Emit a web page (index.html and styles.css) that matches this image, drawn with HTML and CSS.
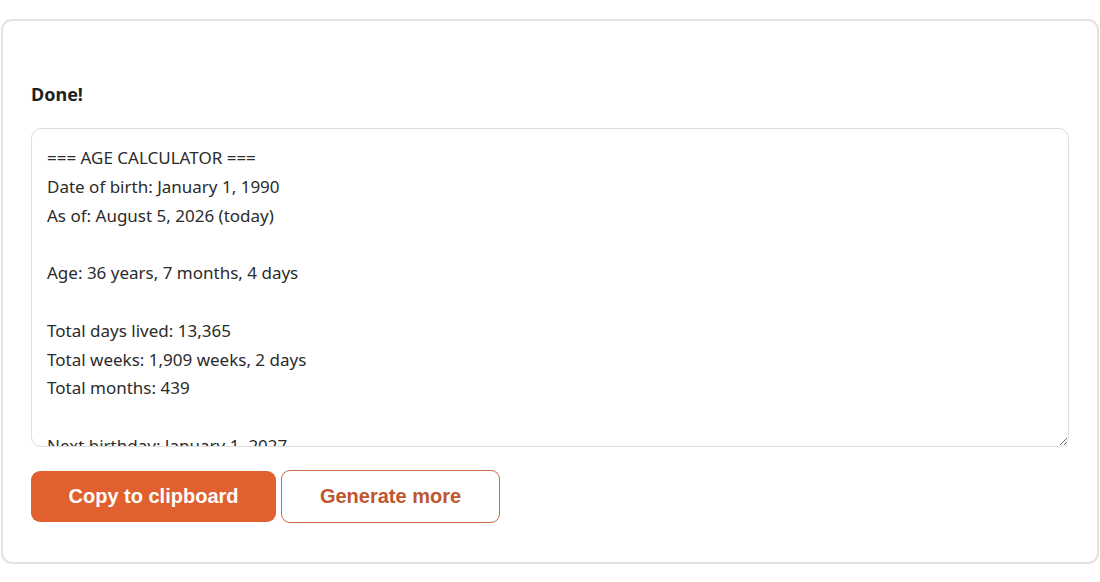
FILE: index.html
```html
<!DOCTYPE html>
<html lang="en">
<head>
<meta charset="utf-8">
<title>Age Calculator</title>
<link rel="stylesheet" href="styles.css">
</head>
<body>
<div class="card">
  <h3 class="status">Done!</h3>
  <textarea class="output" readonly>=== AGE CALCULATOR ===
Date of birth: January 1, 1990
As of: August 5, 2026 (today)

Age: 36 years, 7 months, 4 days

Total days lived: 13,365
Total weeks: 1,909 weeks, 2 days
Total months: 439

Next birthday: January 1, 2027
Days until next birthday: 149
Turning: 37</textarea>
  <div class="actions">
    <button class="btn btn-primary">Copy to clipboard</button>
    <button class="btn btn-outline">Generate more</button>
  </div>
</div>
</body>
</html>
```

FILE: styles.css
```css
html, body {
  margin: 0;
  padding: 0;
  background: #ffffff;
}

body {
  padding: 19px 0 18px 1px;
  font-family: "Noto Sans", "Open Sans", sans-serif;
}

.card {
  width: 1098px;
  box-sizing: border-box;
  border: 2px solid #e2e2e2;
  border-radius: 11px;
  padding: 59px 28px 39px 28px;
  background: #fff;
}

.status {
  margin: 0 0 20px 0;
  font-size: 18px;
  line-height: 28px;
  font-weight: 700;
  color: #1f1f1f;
}

.output {
  display: block;
  width: 100%;
  height: 319px;
  box-sizing: border-box;
  margin: 0;
  padding: 15px 15px;
  border: 1px solid #dedede;
  border-radius: 10px;
  font-family: "Noto Sans", "Open Sans", sans-serif;
  font-size: 17px;
  line-height: 28.8px;
  color: #2b2b2b;
  background: #fff;
  resize: vertical;
  overflow: hidden;
  outline: none;
}

.actions {
  display: flex;
  gap: 5px;
  align-items: center;
  margin-top: 23px;
}

.btn {
  font-family: "Liberation Sans", Arial, sans-serif;
  font-weight: 700;
  font-size: 20px;
  border-radius: 9px;
  cursor: pointer;
  box-sizing: border-box;
}

.btn-primary {
  width: 245px;
  height: 51px;
  background: #e0602f;
  color: #fff;
  border: none;
}

.btn-outline {
  width: 219px;
  height: 53px;
  background: #fff;
  color: #c0562e;
  border: 1px solid #c8693f;
}
```
